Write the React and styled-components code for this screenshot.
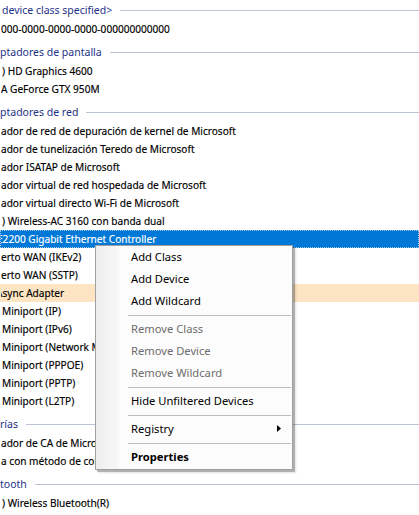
import React from "react";
import styled, { createGlobalStyle } from "styled-components";

const GlobalStyle = createGlobalStyle`
  html, body {
    margin: 0;
    padding: 0;
    background: #ffffff;
    overflow: hidden;
  }
`;

const Page = styled.div`
  position: relative;
  width: 419px;
  height: 515px;
  overflow: hidden;
  background: #ffffff;
  font-family: "Noto Sans", "Open Sans", sans-serif;
`;

const List = styled.div`
  display: flex;
  flex-direction: column;
  margin-top: -4px;
`;

const GroupHeader = styled.div`
  height: 24px;
  display: flex;
  align-items: center;
  gap: 8px;
  padding-top: 4px;
  box-sizing: border-box;
  padding-left: ${(p) => p.indent || 0}px;
  color: #1e3287;
  font-size: 10.5px;
  white-space: nowrap;

  &::after {
    content: "";
    flex: 1;
    height: 1px;
    background: #bcc5d6;
  }
`;

const Item = styled.div`
  height: 18px;
  font-size: 10.1px;
  line-height: 16px;
  white-space: nowrap;
  overflow: hidden;
  box-sizing: border-box;
  text-indent: ${(p) => p.shift || 0}px;
  color: ${(p) => (p.selected ? "#ffffff" : "#000000")};
  -webkit-text-stroke: 0.15px ${(p) => (p.selected ? "#ffffff" : "#000000")};
  background: ${(p) =>
    p.selected ? "#0078d7" : p.hot ? "#fde4c3" : "transparent"};
  border: 1px dotted ${(p) => (p.selected ? "#9fc7ea" : "transparent")};
`;

const Menu = styled.div`
  position: absolute;
  left: 95px;
  top: 245px;
  width: 198px;
  box-sizing: border-box;
  border: 1px solid #a0a0a0;
  padding-bottom: 1px;
  background: linear-gradient(
    to right,
    #eeeeee 0px,
    #f7f7f7 22px,
    #fcfcfc 23px,
    #fcfcfc 100%
  );
  box-shadow: 2px 2px 0 0 rgba(0, 0, 0, 0.22), 3px 3px 2px 0 rgba(0, 0, 0, 0.12);
  font-size: 11.2px;
  display: flex;
  flex-direction: column;
`;

const MenuItem = styled.div`
  height: 22px;
  display: flex;
  align-items: center;
  padding-left: 35px;
  padding-right: 11px;
  padding-bottom: 1px;
  box-sizing: border-box;
  color: ${(p) => (p.disabled ? "#6d6d6d" : "#000000")};
  font-weight: ${(p) => (p.bold ? 700 : 400)};
  white-space: nowrap;
`;

const Label = styled.span`
  flex: 1;
`;

const Separator = styled.div`
  height: 6px;
  display: flex;
  align-items: center;
  padding-left: 32px;
  padding-right: 1px;

  &::before {
    content: "";
    flex: 1;
    height: 1px;
    background: #bdbdbd;
  }
`;

const Arrow = () => (
  <svg width="4" height="7" viewBox="0 0 4 7">
    <path d="M0 0 L4 3.5 L0 7 Z" fill="#000" />
  </svg>
);

const rows = [
  { h: "device class specified>", indent: 2 },
  { t: "000-0000-0000-0000-000000000000" },
  { h: "ptadores de pantalla" },
  { t: ") HD Graphics 4600", shift: 1 },
  { t: "A GeForce GTX 950M", shift: 0 },
  { h: "ptadores de red" },
  { t: "ador de red de depuración de kernel de Microsoft" },
  { t: "ador de tunelización Teredo de Microsoft" },
  { t: "ador ISATAP de Microsoft" },
  { t: "ador virtual de red hospedada de Microsoft" },
  { t: "ador virtual directo Wi-Fi de Microsoft" },
  { t: ") Wireless-AC 3160 con banda dual", shift: 1 },
  { t: "E2200 Gigabit Ethernet Controller", shift: -4, selected: true },
  { t: "erto WAN (IKEv2)" },
  { t: "erto WAN (SSTP)" },
  { t: "Async Adapter", shift: -5, hot: true },
  { t: "Miniport (IP)", shift: 1 },
  { t: "Miniport (IPv6)", shift: 1 },
  { t: "Miniport (Network Monitor)", shift: 1 },
  { t: "Miniport (PPPOE)", shift: 1 },
  { t: "Miniport (PPTP)", shift: 1 },
  { t: "Miniport (L2TP)", shift: 1 },
  { h: "rías" },
  { t: "ador de CA de Microsoft" },
  { t: "a con método de control compatible con ACPI de Microsoft" },
  { h: "tooth" },
  { t: ") Wireless Bluetooth(R)", shift: 1 },
];

const menu = [
  { l: "Add Class" },
  { l: "Add Device" },
  { l: "Add Wildcard" },
  { sep: true },
  { l: "Remove Class", disabled: true },
  { l: "Remove Device", disabled: true },
  { l: "Remove Wildcard", disabled: true },
  { sep: true },
  { l: "Hide Unfiltered Devices" },
  { sep: true },
  { l: "Registry", sub: true },
  { sep: true },
  { l: "Properties", bold: true },
];

export default function App() {
  return (
    <Page>
      <GlobalStyle />
      <List>
        {rows.map((r, i) =>
          r.h ? (
            <GroupHeader key={i} indent={r.indent}>
              {r.h}
            </GroupHeader>
          ) : (
            <Item key={i} shift={r.shift} selected={r.selected} hot={r.hot}>
              {r.t}
            </Item>
          )
        )}
      </List>
      <Menu>
        {menu.map((m, i) =>
          m.sep ? (
            <Separator key={i} />
          ) : (
            <MenuItem key={i} disabled={m.disabled} bold={m.bold}>
              <Label>{m.l}</Label>
              {m.sub && <Arrow />}
            </MenuItem>
          )
        )}
      </Menu>
    </Page>
  );
}
